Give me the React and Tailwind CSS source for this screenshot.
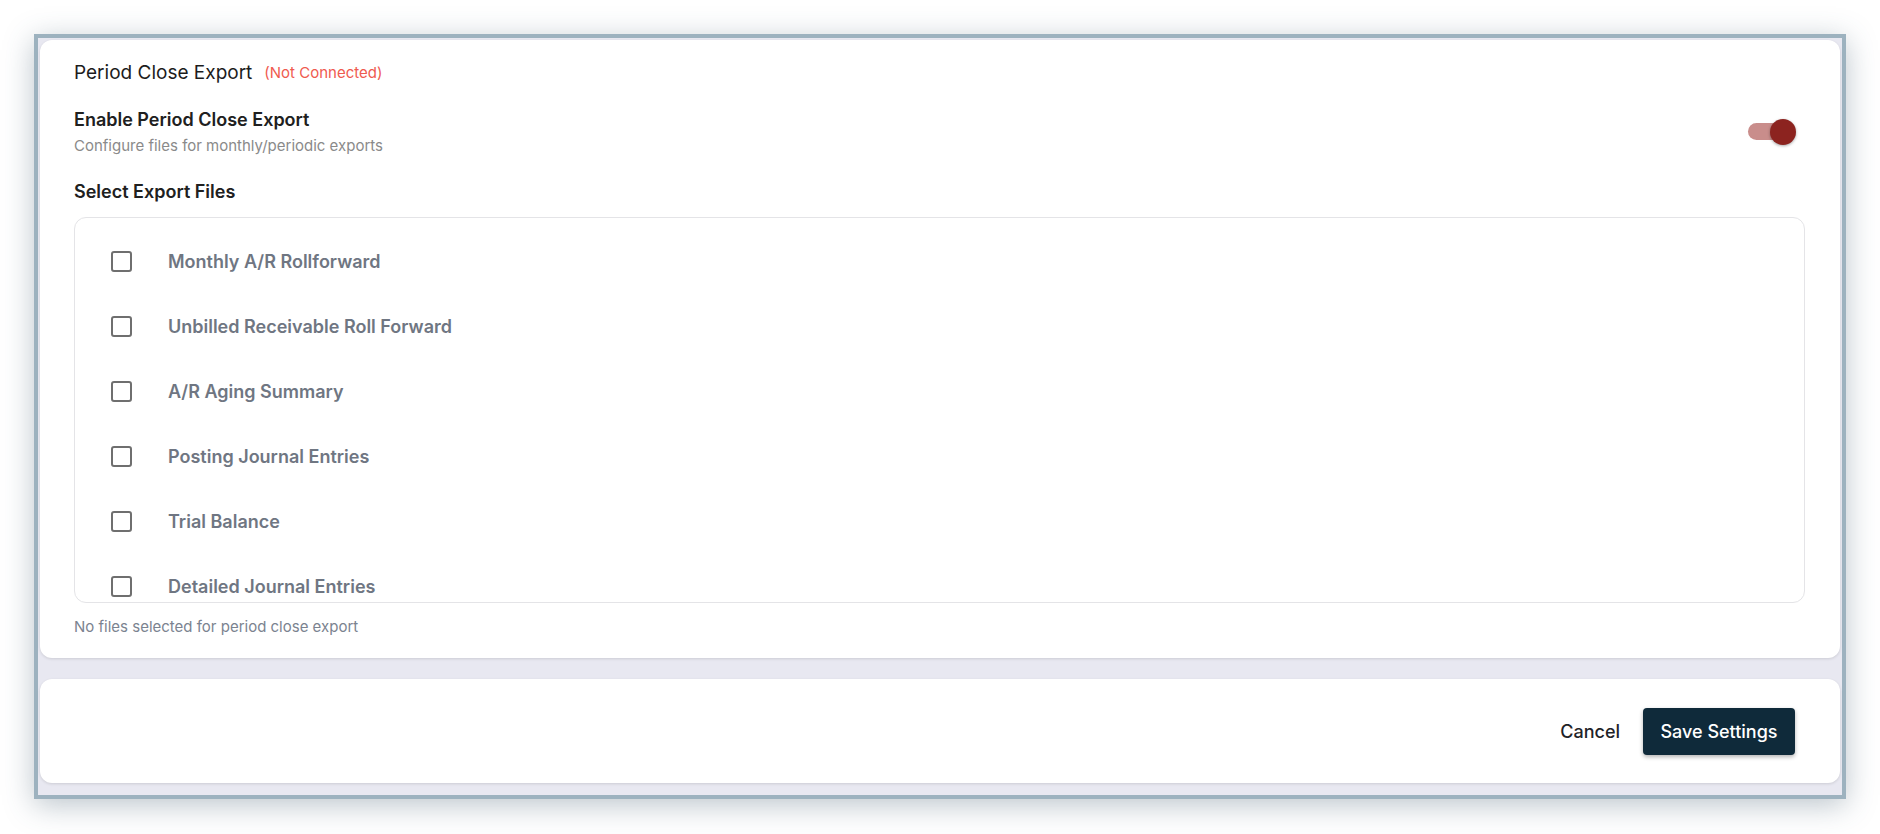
import { useState } from 'react'

const exportFiles = [
  'Monthly A/R Rollforward',
  'Unbilled Receivable Roll Forward',
  'A/R Aging Summary',
  'Posting Journal Entries',
  'Trial Balance',
  'Detailed Journal Entries',
]

function Toggle({ on, onChange }) {
  return (
    <button
      onClick={() => onChange(!on)}
      className="relative w-[48px] h-[26px] mr-[9px] shrink-0"
      aria-label="Enable Period Close Export"
    >
      <span className="absolute left-0 top-[4.5px] w-[42px] h-[17px] rounded-full bg-[#c98d8b]" />
      <span className="absolute right-0 top-0 w-[26px] h-[26px] rounded-full bg-[#8c231f] shadow-[0_1px_3px_rgba(0,0,0,0.35)]" />
    </button>
  )
}

function FileRow({ label, checked, onToggle }) {
  return (
    <label className="flex items-center h-[65px] pl-[36px] shrink-0 cursor-pointer">
      <span
        onClick={onToggle}
        className={`w-[21px] h-[21px] rounded-[3px] border-2 ${checked ? 'border-[#8c231f] bg-[#8c231f]' : 'border-[#6f6f6f] bg-white'}`}
      />
      <span className="ml-[36px] text-[18px] leading-[24px] font-semibold text-[#6f7682]">{label}</span>
    </label>
  )
}

export default function App() {
  const [enabled, setEnabled] = useState(true)
  const [selected, setSelected] = useState([])

  const toggleFile = (name) => {
    setSelected((prev) => (prev.includes(name) ? prev.filter((n) => n !== name) : [...prev, name]))
  }

  return (
    <div className="w-full h-[834px] bg-white pt-[34px] px-[34px] font-['Inter','Liberation_Sans',sans-serif]">
      <div className="h-[765px] border-4 border-[#9db2bf] bg-[#e8e8f1] p-[2px] flex flex-col shadow-[0_6px_28px_rgba(60,85,105,0.35)]">
        {/* Period close export settings */}
        <div className="h-[618px] bg-white rounded-[12px] shadow-[0_1px_3px_rgba(0,0,0,0.12)] pt-[19px] pl-[34px] pr-[35px] flex flex-col">
          <div className="flex items-center h-[28px]">
            <h2 className="text-[19px] leading-[28px] text-[#1c1c1c]">Period Close Export</h2>
            <span className="ml-[12px] text-[15px] leading-[20px] text-[#ef5a4f]">(Not Connected)</span>
          </div>

          <div className="mt-[21px] flex items-center justify-between">
            <div>
              <p className="text-[18px] leading-[24px] font-semibold text-[#202020]">Enable Period Close Export</p>
              <p className="mt-[5px] text-[15px] leading-[18px] text-[#8a8a8a]">Configure files for monthly/periodic exports</p>
            </div>
            <Toggle on={enabled} onChange={setEnabled} />
          </div>

          <p className="mt-[25px] text-[18px] leading-[24px] font-semibold text-[#202020]">Select Export Files</p>

          <div className="mt-[13px] h-[386px] border border-[#e4e4e7] rounded-[12px] overflow-hidden pt-[11px] flex flex-col">
            {exportFiles.map((name) => (
              <FileRow
                key={name}
                label={name}
                checked={selected.includes(name)}
                onToggle={() => toggleFile(name)}
              />
            ))}
          </div>

          <p className="mt-[15px] text-[15px] leading-[18px] text-[#7b8390]">
            {selected.length === 0 ? 'No files selected for period close export' : `${selected.length} files selected`}
          </p>
        </div>

        {/* Actions */}
        <div className="mt-[21px] h-[104px] bg-white rounded-[12px] shadow-[0_1px_3px_rgba(0,0,0,0.12)] flex items-center justify-end pr-[45px]">
          <button className="text-[18px] font-medium text-[#1f2328] px-[2px]">Cancel</button>
          <button className="ml-[21px] w-[152px] h-[47px] rounded-[4px] bg-[#0f2a3a] text-white text-[18px] font-medium shadow-[0_2px_4px_rgba(0,0,0,0.3)]">
            Save Settings
          </button>
        </div>
      </div>
    </div>
  )
}
